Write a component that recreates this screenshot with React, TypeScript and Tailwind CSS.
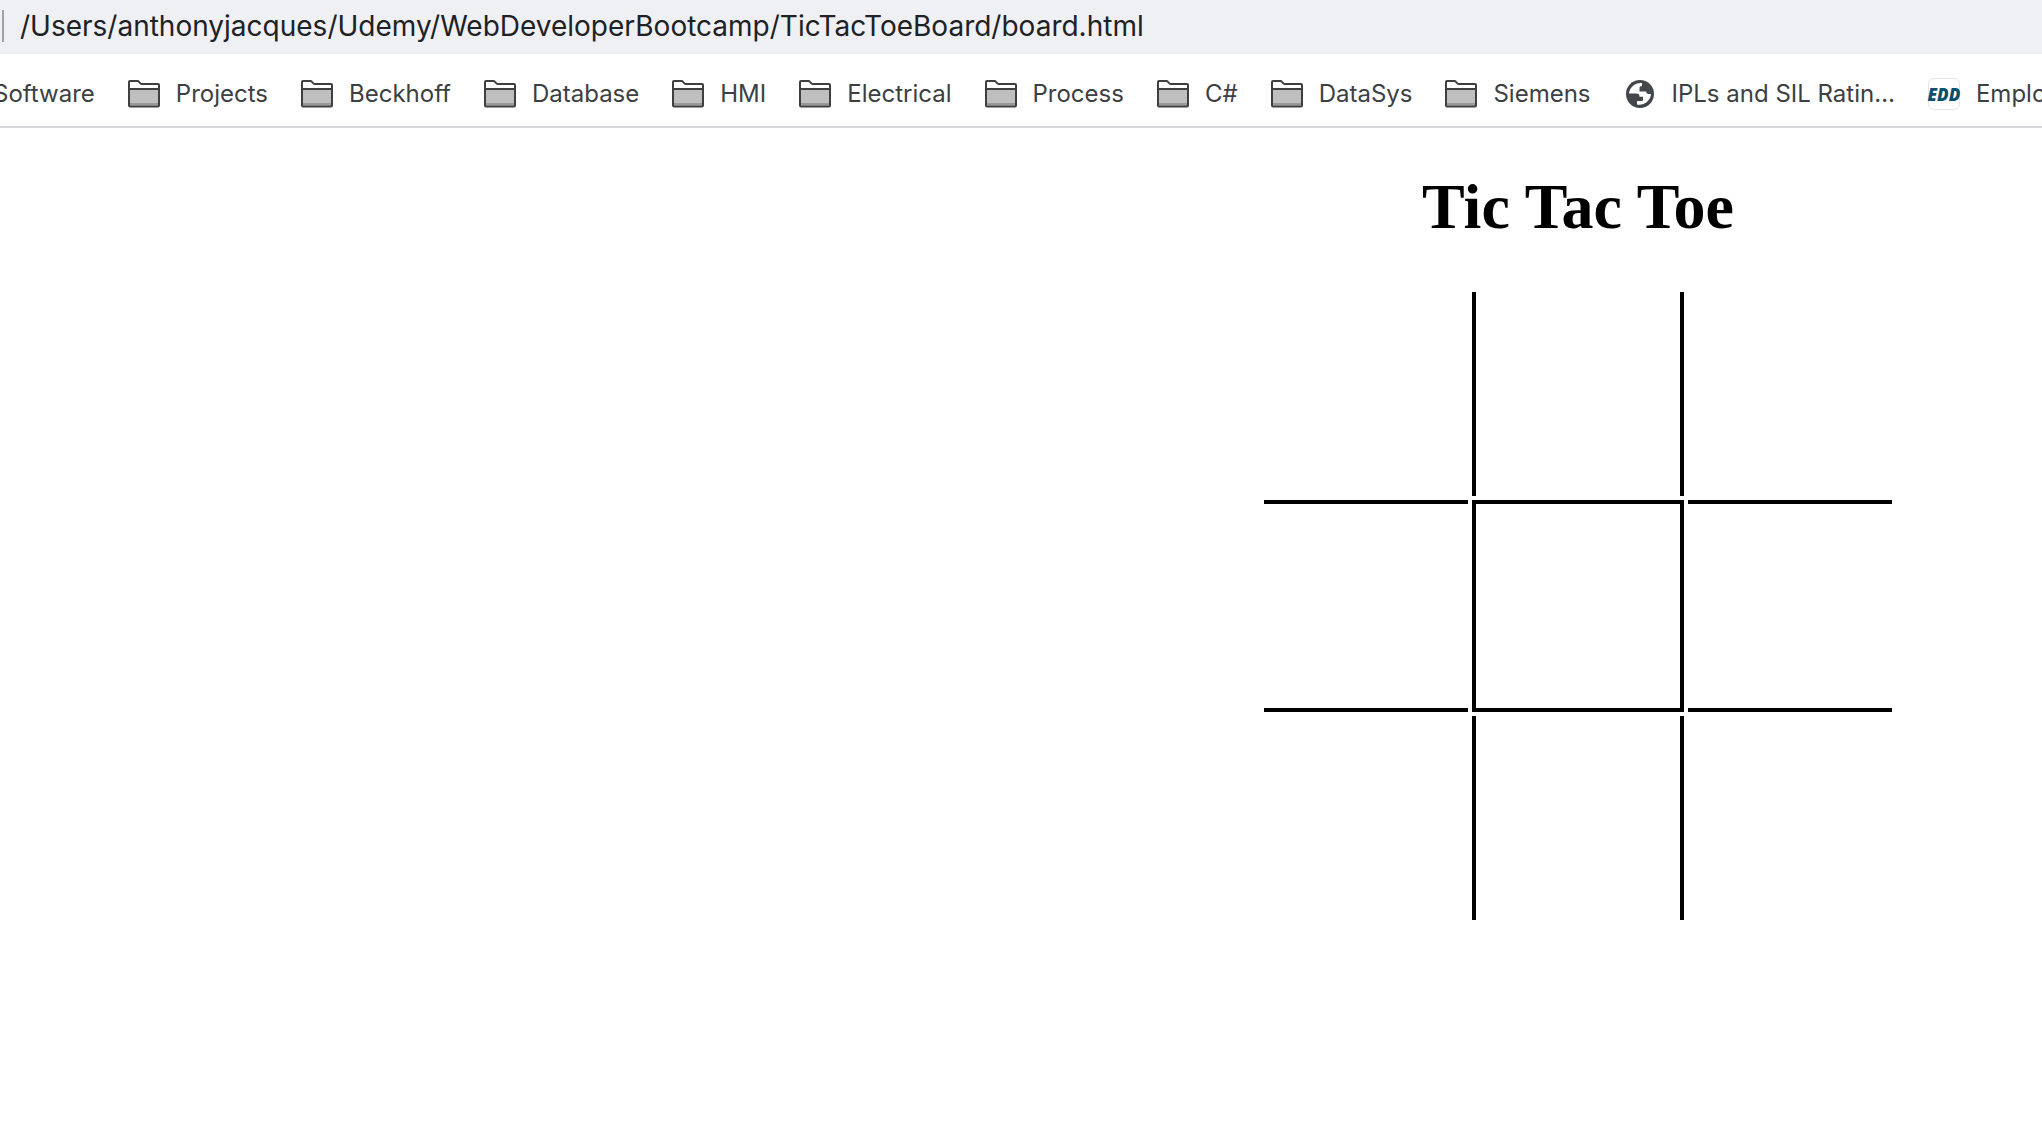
import React from "react";

const folders = [
  "Software",
  "Projects",
  "Beckhoff",
  "Database",
  "HMI",
  "Electrical",
  "Process",
  "C#",
  "DataSys",
  "Siemens",
];

function FolderIcon() {
  return (
    <svg width="32" height="30" viewBox="0 0 32 30" className="shrink-0" aria-hidden="true">
      <path d="M1 10h30v17H1z" fill="#bfbfbf" />
      <path d="M2 24h28v2H2z" fill="#989898" />
      <path
        d="M1 26.500V3a1 1 0 0 1 1-1h7.500c.8 0 1 .2 1.500.8l1.400 1.600c.5.500.8.600 1.500.600H30a1 1 0 0 1 1 1v20.500a1 1 0 0 1-1 1H2a1 1 0 0 1-1-1z"
        fill="none"
        stroke="#3f3f3f"
        strokeWidth="2"
      />
      <path d="M1 10h30" stroke="#3f3f3f" strokeWidth="2" />
    </svg>
  );
}

function GlobeIcon() {
  return (
    <svg width="32" height="32" viewBox="0 0 32 32" className="shrink-0" aria-hidden="true">
      <circle cx="16" cy="16" r="14" fill="#43474c" />
      <path
        d="M18 5c-7-.6-12.500 4.500-13 10.500h7.500c2 0 3 1.200 3 3.200h3.500v2.800c0 1-.7 1.500-1.700 1.500h-4.300v3.500c6.500 1.500 13.500-3.500 14-10.500h-2.500c-1.500 0-2.300-1-2.300-2.500h-6.700v-3.700c0-1 .6-1.600 1.600-1.600h.9z"
        fill="#ffffff"
      />
    </svg>
  );
}

function EddIcon() {
  return (
    <span className="flex size-8 shrink-0 items-center justify-center rounded-md border border-gray-200 bg-white font-['Open_Sans',sans-serif] text-[17px] leading-none font-extrabold text-[#0b4f6c] italic">
      EDD
    </span>
  );
}

function Bookmark({ icon, label }: { icon?: React.ReactNode; label: string }) {
  return (
    <a href="#" className="flex shrink-0 items-center gap-4 whitespace-nowrap">
      {icon}
      <span>{label}</span>
    </a>
  );
}

const rowBorders = ["", "border-y-4", ""];
const columnBorders = ["", "border-x-4", ""];

function Board() {
  return (
    <table className="border-separate border-spacing-1">
      <tbody>
        {rowBorders.map((row, r) => (
          <tr key={r}>
            {columnBorders.map((column, c) => (
              <td key={c} className={`box-content size-[204px] border-black p-0 ${row} ${column}`} />
            ))}
          </tr>
        ))}
      </tbody>
    </table>
  );
}

export default function App() {
  return (
    <div className="min-h-screen overflow-x-hidden bg-white">
      <header className="font-[Inter,sans-serif]">
        <div className="flex h-[54px] items-center bg-[#eff0f3] pl-0.5">
          <span className="mb-0.5 h-8 w-0.5 bg-[#a0a1a4]" />
          <input
            type="text"
            aria-label="Address"
            defaultValue="/Users/anthonyjacques/Udemy/WebDeveloperBootcamp/TicTacToeBoard/board.html"
            className="mb-0.5 ml-4 flex-1 bg-transparent text-[28px] leading-9 text-[#202124] outline-none"
          />
        </div>
        <nav
          aria-label="Bookmarks"
          className="-ml-[7px] flex h-[74px] items-center gap-[33px] overflow-hidden border-b-2 border-[#d5d5dc] pt-2 text-[24px] leading-8 text-[#3c4043]"
        >
          {folders.map((name, i) => (
            <Bookmark key={name} icon={i > 0 && <FolderIcon />} label={name} />
          ))}
          <Bookmark icon={<GlobeIcon />} label="IPLs and SIL Ratin…" />
          <Bookmark icon={<EddIcon />} label="Employee" />
        </nav>
      </header>
      <main className="flex flex-col items-center pl-[1114px] font-['Liberation_Serif',serif] text-black">
        <h1 className="mt-[42px] mb-11 text-[64px] leading-[74px] font-bold">Tic Tac Toe</h1>
        <Board />
      </main>
    </div>
  );
}
